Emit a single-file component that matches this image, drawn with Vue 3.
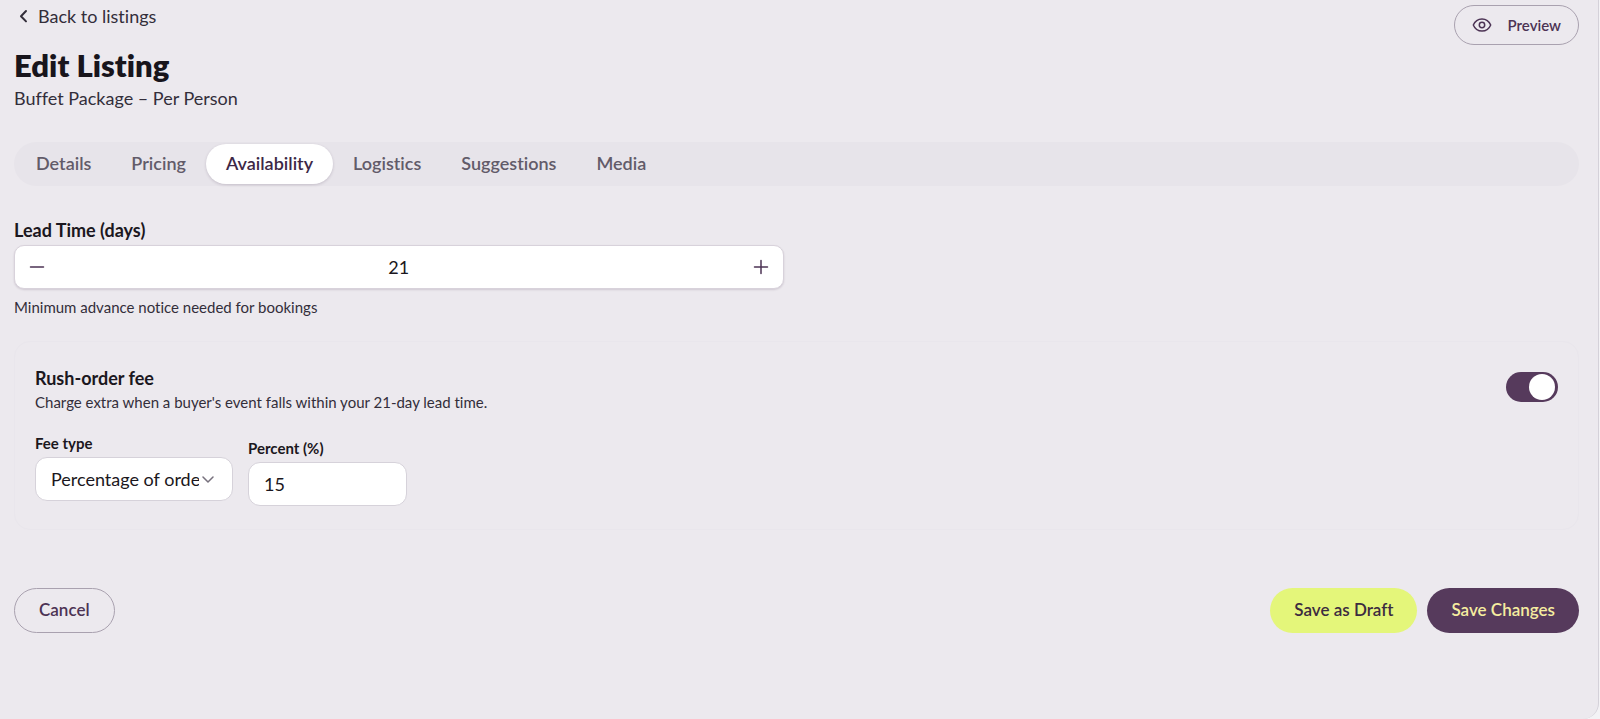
<script setup>
import { ref } from 'vue'

const tabs = ['Details', 'Pricing', 'Availability', 'Logistics', 'Suggestions', 'Media']
const activeTab = ref('Availability')
const leadTime = ref(21)
const rushFee = ref(true)
const feeType = ref('percent')
const percent = ref('15')
</script>

<template>
  <div class="page">
    <header class="top">
      <div class="heading">
        <a class="back" href="#listings">
          <svg width="20" height="20" viewBox="0 0 20 20" aria-hidden="true"><path d="M12 5 7 10.200l5 5.200" /></svg>
          Back to listings
        </a>
        <h1>Edit Listing</h1>
        <p class="subtitle">Buffet Package – Per Person</p>
      </div>
      <button class="btn outline preview" type="button">
        <svg width="20" height="20" viewBox="0 0 20 20" aria-hidden="true">
          <path d="M1.300 10C3 6 6.200 3.900 10 3.900S17 6 18.700 10C17 14 13.800 16.100 10 16.100S3 14 1.300 10Z" />
          <circle cx="10" cy="10" r="2.700" />
        </svg>
        Preview
      </button>
    </header>

    <nav class="tabs" aria-label="Listing sections">
      <button
        v-for="tab in tabs"
        :key="tab"
        type="button"
        class="tab"
        :class="{ active: tab === activeTab }"
        @click="activeTab = tab"
      >{{ tab }}</button>
    </nav>

    <section class="lead">
      <label class="label" for="lead-time">Lead Time (days)</label>
      <div class="stepper">
        <button type="button" aria-label="Decrease lead time" @click="leadTime--">
          <svg width="16" height="16" viewBox="0 0 16 16" aria-hidden="true"><path d="M1.500 8h13" /></svg>
        </button>
        <input id="lead-time" v-model="leadTime" type="text" inputmode="numeric" />
        <button type="button" aria-label="Increase lead time" @click="leadTime++">
          <svg width="16" height="16" viewBox="0 0 16 16" aria-hidden="true"><path d="M1.500 8h13M8 1.500v13" /></svg>
        </button>
      </div>
      <p class="hint">Minimum advance notice needed for bookings</p>
    </section>

    <section class="card">
      <div class="card-head">
        <div>
          <label class="label" for="rush">Rush-order fee</label>
          <p class="desc">Charge extra when a buyer's event falls within your 21-day lead time.</p>
        </div>
        <input id="rush" v-model="rushFee" class="switch" type="checkbox" role="switch" />
      </div>
      <div class="fields">
        <div class="field fee-type">
          <label for="fee-type">Fee type</label>
          <div class="select">
            <select id="fee-type" v-model="feeType">
              <option value="percent">Percentage of order</option>
              <option value="flat">Flat fee</option>
            </select>
            <svg width="12" height="8" viewBox="0 0 12 8" aria-hidden="true"><path d="m1 1 5 5 5-5" /></svg>
          </div>
        </div>
        <div class="field percent">
          <label for="percent">Percent (%)</label>
          <input id="percent" v-model="percent" type="text" inputmode="numeric" />
        </div>
      </div>
    </section>

    <footer class="actions">
      <button class="btn outline" type="button">Cancel</button>
      <div class="save">
        <button class="btn draft" type="button">Save as Draft</button>
        <button class="btn primary" type="button">Save Changes</button>
      </div>
    </footer>
  </div>
</template>

<style>
body {
  background: #f3f2f5;
}
</style>

<style scoped>
.page,
.page * {
  box-sizing: border-box;
}
.page {
  min-height: 100vh;
  margin-right: 1px;
  padding: 4px 19px 0 14px;
  border-right: 1px solid #d4d1d9;
  border-bottom-right-radius: 16px;
  background: #ece9ee;
  color: #1b1720;
  font-family: Lato, sans-serif;
  font-size: 18px;
  font-variant-ligatures: none;
  line-height: 24px;
}
h1,
p {
  margin: 0;
}
svg {
  flex: none;
  fill: none;
  stroke: currentColor;
  stroke-width: 1.5;
  stroke-linecap: round;
  stroke-linejoin: round;
}
button,
input,
select {
  margin: 0;
  font: inherit;
}
button {
  cursor: pointer;
}
.top {
  display: flex;
  justify-content: space-between;
  align-items: flex-start;
}
.heading {
  display: flex;
  flex-direction: column;
  align-items: flex-start;
}
.back {
  display: flex;
  align-items: center;
  gap: 4px;
  color: #332e3a;
  text-decoration: none;
}
.back svg {
  stroke-width: 2;
}
h1 {
  margin-top: 16px;
  color: #18151c;
  font-size: 31px;
  font-weight: 800;
  line-height: 42px;
}
.subtitle {
  color: #332e3a;
}
.btn {
  display: flex;
  align-items: center;
  justify-content: center;
  height: 45px;
  padding: 0 24px 2px;
  border: 0;
  border-radius: 24px;
  font-size: 17px;
  font-weight: 600;
}
.outline {
  border: 1px solid #a9a1af;
  background: transparent;
  color: #4c3354;
}
.preview {
  gap: 16px;
  height: 40px;
  margin-top: 1px;
  padding: 0 17px;
  font-size: 15px;
}
.tabs {
  display: flex;
  margin-top: 32px;
  padding: 2px 2px;
  border-radius: 22px;
  background: #e7e4ea;
}
.tab {
  height: 40px;
  padding: 0 20px 2px;
  border: 0;
  border-radius: 20px;
  background: transparent;
  color: #625b69;
  font-weight: 600;
}
.tab.active {
  background: #fff;
  color: #3d2746;
  box-shadow: 0 1px 3px rgb(60 40 70 / 20%);
}
.label {
  display: block;
  font-weight: 700;
}
.lead {
  width: calc(50% - 13px);
  margin-top: 32px;
}
.stepper {
  display: flex;
  height: 44px;
  margin-top: 3px;
  border: 1px solid #d8d2db;
  border-radius: 10px;
  background: #fff;
  box-shadow: 0 1px 2px rgb(60 40 70 / 16%);
}
.stepper button {
  display: flex;
  align-items: center;
  justify-content: center;
  width: 44px;
  padding: 0;
  border: 0;
  background: transparent;
  color: #4c3354;
}
.stepper input {
  flex: 1;
  min-width: 0;
  border: 0;
  background: transparent;
  color: #1b1720;
  text-align: center;
}
.hint,
.desc {
  color: #332e3a;
  font-size: 15px;
}
.hint {
  margin-top: 6px;
}
.card {
  margin-top: 22px;
  padding: 24px 20px 23px;
  border: 1px solid #e9e6ec;
  border-radius: 16px;
}
.card-head {
  display: flex;
  align-items: flex-start;
  justify-content: space-between;
}
.switch {
  display: flex;
  align-items: center;
  justify-content: flex-start;
  width: 52px;
  height: 30px;
  margin-top: 6px;
  padding: 0 3px;
  border-radius: 15px;
  background: #b5adba;
  appearance: none;
  cursor: pointer;
}
.switch::before {
  width: 26px;
  height: 26px;
  border-radius: 50%;
  background: #fff;
  content: '';
}
.switch:checked {
  justify-content: flex-end;
  background: #563a5c;
}
.fields {
  display: flex;
  align-items: flex-end;
  gap: 15px;
  margin-top: 17px;
}
.field label {
  display: block;
  margin-bottom: 2px;
  font-size: 15px;
  font-weight: 700;
}
.fee-type {
  width: 198px;
  padding-bottom: 5px;
}
.percent {
  width: 159px;
}
.select {
  position: relative;
}
.select svg {
  position: absolute;
  top: 19px;
  right: 19px;
  color: #77717d;
  pointer-events: none;
}
select,
.percent input {
  display: block;
  width: 100%;
  height: 44px;
  padding: 0 15px;
  border: 1px solid #d6d2da;
  border-radius: 12px;
  background: #fff;
  color: #1b1720;
}
select {
  padding-right: 33px;
  appearance: none;
}
.actions {
  display: flex;
  justify-content: space-between;
  margin-top: 58px;
}
.save {
  display: flex;
  gap: 10px;
}
.draft {
  background: #e4f67a;
  color: #3c2c40;
}
.primary {
  background: #563a5c;
  color: #f5eda0;
}
</style>
